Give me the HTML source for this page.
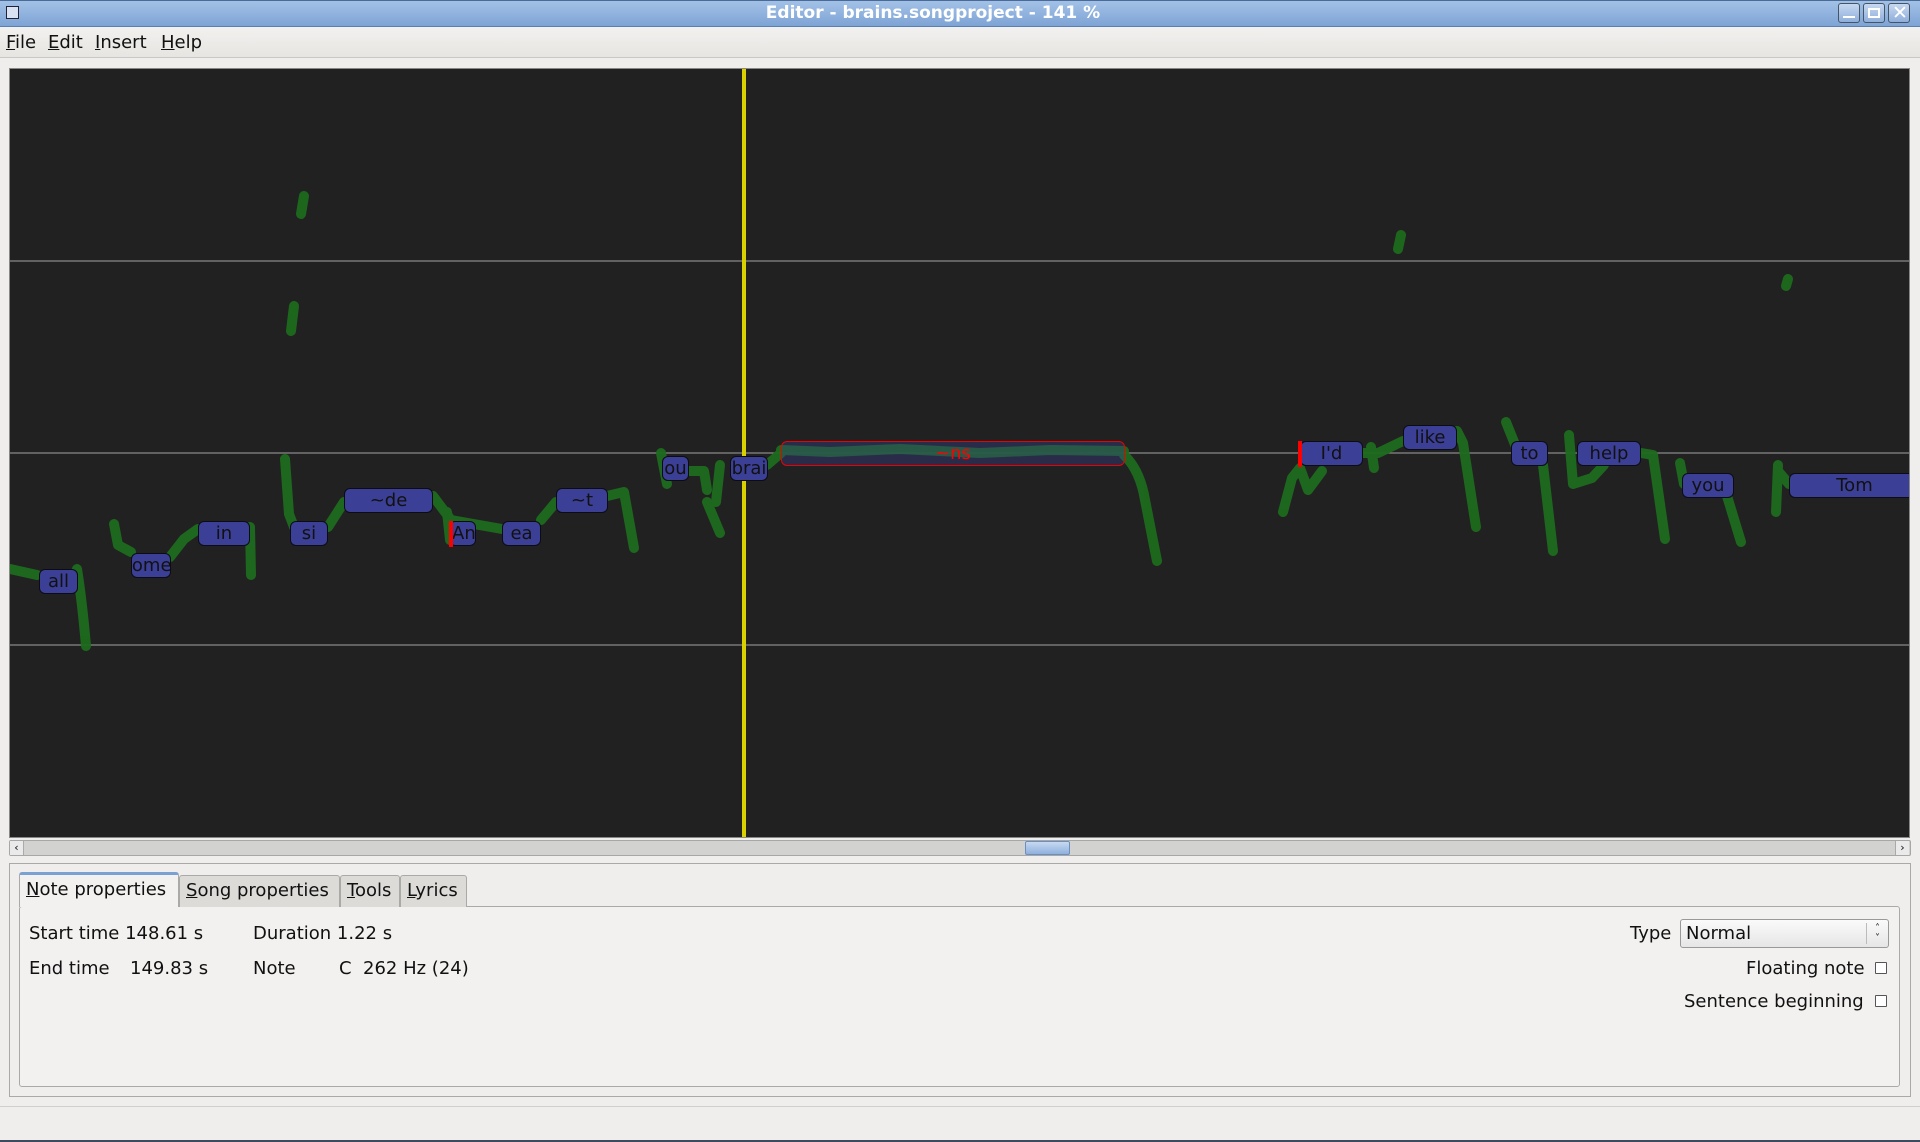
<!DOCTYPE html>
<html><head><meta charset="utf-8"><style>
*{margin:0;padding:0;box-sizing:border-box}
body{width:1920px;height:1142px;background:#efeeec;font-family:"DejaVu Sans","Liberation Sans",sans-serif;font-size:18px;color:#111;position:relative;overflow:hidden}
.abs{position:absolute}
#title{left:0;top:0;width:1866px;height:27px;background:linear-gradient(#a3c1e6,#7ea4d5);border-top:1px solid #4a6a98;border-bottom:1px solid #5a7fb3;color:#fff;font-weight:bold;font-size:17px;text-align:center;line-height:26px}
#titlebg{left:0;top:0;width:1920px;height:27px;background:linear-gradient(#a3c1e6,#7ea4d5);border-top:1px solid #4a6a98;border-bottom:1px solid #5a7fb3}
#menu{left:0;top:27px;width:1920px;height:31px;background:linear-gradient(#f2f1ef,#e6e5e2);border-bottom:1px solid #c8c8c6}
#menu span{position:absolute;top:5px}
u{text-decoration:underline}
#canvas{left:9px;top:68px;width:1901px;height:770px;background:#212121;border:1px solid #888;overflow:hidden}
.n{position:absolute;height:25px;background:#3b3f95;border:1px solid #0c0c14;border-radius:6px;text-align:center;line-height:23px;font-size:18px;color:#111;overflow:hidden;white-space:nowrap}
.tab{position:absolute;top:875px;height:32px;background:#dcdbd8;border:1px solid #a9a9a7;border-bottom:none;border-radius:3px 3px 0 0;line-height:30px;padding:0 6px}
.lbl{position:absolute}
.cb{position:absolute;width:12px;height:12px;border:1px solid #555;background:#fff;border-radius:1px}
</style></head><body>
<div id="titlebg" class="abs"></div>
<div id="title" class="abs" style="background:none;border:none">Editor - brains.songproject - 141 %</div>
<div class="abs" style="left:6px;top:6px;width:13px;height:13px;border:1px solid #223;background:#d8e2f2"></div>
<div class="abs" style="left:1838px;top:3px;width:22px;height:20px;border:1px solid #456;border-radius:3px;background:linear-gradient(#c6d8f0,#8eaedb)"></div>
<div class="abs" style="left:1863px;top:3px;width:22px;height:20px;border:1px solid #456;border-radius:3px;background:linear-gradient(#c6d8f0,#8eaedb)"></div>
<div class="abs" style="left:1888px;top:3px;width:22px;height:20px;border:1px solid #456;border-radius:3px;background:linear-gradient(#c6d8f0,#8eaedb)"></div>
<div class="abs" style="left:1843px;top:16px;width:12px;height:2px;background:#fff"></div>
<div class="abs" style="left:1868px;top:8px;width:12px;height:10px;border:2px solid #fff"></div>
<div class="abs" style="left:1892px;top:2px;color:#fff;font-size:19px">✕</div>
<div id="menu" class="abs"><span style="left:6px"><u>F</u>ile</span><span style="left:48px"><u>E</u>dit</span><span style="left:95px"><u>I</u>nsert</span><span style="left:161px"><u>H</u>elp</span></div>

<div id="canvas" class="abs">
<svg width="1901" height="770" style="position:absolute;left:0;top:0" viewBox="10 69 1901 770">
<g stroke="#8a8a8a" stroke-width="1.3"><line x1="10" y1="261" x2="1911" y2="261"/><line x1="10" y1="453" x2="1911" y2="453"/><line x1="10" y1="645" x2="1911" y2="645"/></g>
<g fill="none" stroke="#1e6b1e" stroke-width="10" stroke-linecap="round" stroke-linejoin="round" opacity="0.95">
<path d="M10,569 L37,575"/><path d="M77,569 Q82,600 86,646"/>
<path d="M114,524 L118,545 L131,552"/><path d="M170,557 L184,539 L198,529"/><path d="M250,527 L251,575"/>
<path d="M285,459 L289,514 L294,527"/><path d="M328,527 L344,502"/>
<path d="M433,496 L451,520 L502,529"/><path d="M447,512 L450,540"/><path d="M541,520 L556,502"/>
<path d="M607,496 L624,492 L634,548"/><path d="M661,453 L667,484"/><path d="M688,471 L704,471 L707,490"/>
<path d="M707,502 L720,533"/><path d="M720,465 L716,502"/><path d="M767,465 L781,453"/>
<path d="M781,450 L830,452 L900,449 L980,453 L1050,450 L1124,451"/>
<path d="M1124,455 Q1140,470 1145,500 L1157,561"/>
<path d="M1283,512 L1292,478 L1300,468 L1308,490 L1322,471"/>
<path d="M1363,453 L1378,453 L1403,441"/><path d="M1371,447 L1374,468"/>
<path d="M1457,431 L1463,443 L1476,527"/><path d="M1506,422 L1516,447"/><path d="M1543,465 L1553,551"/>
<path d="M1569,435 L1573,484 L1592,478 L1604,465"/><path d="M1641,453 L1653,455 L1665,539"/>
<path d="M1680,463 L1684,484"/><path d="M1727,496 L1741,542"/>
<path d="M1778,465 L1776,512"/><path d="M1778,471 L1789,484"/>
<path d="M304,196 L301,214"/><path d="M294,306 L291,331"/><path d="M1401,235 L1398,249"/><path d="M1788,279 L1786,286"/>
</g>
<rect x="742" y="69" width="4" height="770" fill="#d8d000"/>
</svg>
<div class="n" style="left:29px;top:500px;width:39px">all</div>
<div class="n" style="left:121px;top:484px;width:40px;text-indent:-10px">come</div>
<div class="n" style="left:188px;top:452px;width:52px">in</div>
<div class="n" style="left:280px;top:452px;width:38px">si</div>
<div class="n" style="left:334px;top:419px;width:89px">~de</div>
<div class="n" style="left:439px;top:452px;width:27px;text-indent:2px">And</div>
<div class="abs" style="left:439px;top:452px;width:4px;height:26px;background:#f00"></div>
<div class="n" style="left:492px;top:452px;width:39px">ea</div>
<div class="n" style="left:546px;top:419px;width:52px">~t</div>
<div class="n" style="left:652px;top:387px;width:27px">ou</div>
<div class="n" style="left:720px;top:387px;width:38px">brai</div>
<div class="n" style="left:771px;top:372px;width:344px;background:rgba(60,63,150,0.35);border-color:#e00;color:#f00">~ns</div>
<div class="n" style="left:1290px;top:372px;width:63px">I'd</div>
<div class="abs" style="left:1288px;top:372px;width:4px;height:26px;background:#f00"></div>
<div class="n" style="left:1393px;top:356px;width:54px">like</div>
<div class="n" style="left:1501px;top:372px;width:37px">to</div>
<div class="n" style="left:1567px;top:372px;width:64px">help</div>
<div class="n" style="left:1672px;top:404px;width:52px">you</div>
<div class="n" style="left:1779px;top:404px;width:130px;border-right:none;border-radius:6px 0 0 6px">Tom</div>
</div>

<div class="abs" style="left:9px;top:840px;width:1902px;height:16px;background:#d2d2d0;border:1px solid #a7a7a5;border-radius:2px"></div>
<div class="abs" style="left:10px;top:841px;width:14px;height:14px;border-right:1px solid #aaa;background:#eaeaea;font-size:11px;line-height:13px;text-align:center">‹</div>
<div class="abs" style="left:1895px;top:841px;width:14px;height:14px;border-left:1px solid #aaa;background:#eaeaea;font-size:11px;line-height:13px;text-align:center">›</div>
<div class="abs" style="left:1025px;top:841px;width:45px;height:14px;background:linear-gradient(#c7d9f1,#8fb0dc);border:1px solid #6d8fbf;border-radius:2px"></div>

<div class="abs" style="left:9px;top:863px;width:1902px;height:234px;border:1px solid #a9a9a7"></div>
<div class="abs" style="left:19px;top:906px;width:1881px;height:181px;border:1px solid #a9a9a7;border-radius:3px;background:#f2f1f0"></div>
<div class="tab" style="left:19px;top:872px;height:35px;width:160px;background:#f2f1f0;border-top:3px solid #7ba0d2"><u>N</u>ote properties</div>
<div class="tab" style="left:179px;width:161px"><u>S</u>ong properties</div>
<div class="tab" style="left:340px;width:60px"><u>T</u>ools</div>
<div class="tab" style="left:400px;width:67px"><u>L</u>yrics</div>

<div class="lbl" style="left:29px;top:923px">Start time 148.61 s</div>
<div class="lbl" style="left:29px;top:958px">End time</div>
<div class="lbl" style="left:130px;top:958px">149.83 s</div>
<div class="lbl" style="left:253px;top:923px">Duration 1.22 s</div>
<div class="lbl" style="left:253px;top:958px">Note</div>
<div class="lbl" style="left:339px;top:958px">C&nbsp; 262 Hz (24)</div>

<div class="lbl" style="left:1630px;top:923px">Type</div>
<div class="abs" style="left:1680px;top:919px;width:209px;height:29px;border:1px solid #999;border-radius:3px;background:linear-gradient(#fafafa,#e6e6e6);padding-left:5px;line-height:27px">Normal<span style="position:absolute;right:0;top:3px;width:22px;height:21px;border-left:1px solid #bbb;font-size:10px;line-height:10px;text-align:center;padding-top:1px">˄<br>˅</span></div>
<div class="lbl" style="left:1746px;top:958px">Floating note</div>
<div class="cb" style="left:1875px;top:962px"></div>
<div class="lbl" style="left:1684px;top:991px">Sentence beginning</div>
<div class="cb" style="left:1875px;top:995px"></div>

<div class="abs" style="left:0;top:1106px;width:1920px;height:1px;background:#cfcfcd"></div>
<div class="abs" style="left:0;top:1140px;width:1920px;height:2px;background:#3d4b5e"></div>
</body></html>
